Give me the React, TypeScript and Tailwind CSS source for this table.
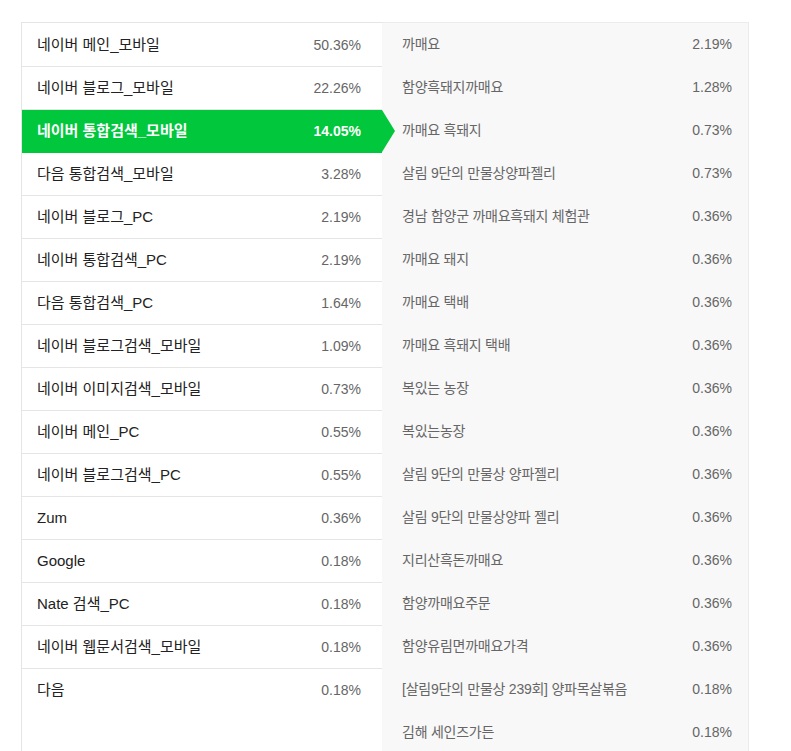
const sources = [
  { name: '네이버 메인_모바일', pct: '50.36%' },
  { name: '네이버 블로그_모바일', pct: '22.26%' },
  { name: '네이버 통합검색_모바일', pct: '14.05%', active: true },
  { name: '다음 통합검색_모바일', pct: '3.28%' },
  { name: '네이버 블로그_PC', pct: '2.19%' },
  { name: '네이버 통합검색_PC', pct: '2.19%' },
  { name: '다음 통합검색_PC', pct: '1.64%' },
  { name: '네이버 블로그검색_모바일', pct: '1.09%' },
  { name: '네이버 이미지검색_모바일', pct: '0.73%' },
  { name: '네이버 메인_PC', pct: '0.55%' },
  { name: '네이버 블로그검색_PC', pct: '0.55%' },
  { name: 'Zum', pct: '0.36%' },
  { name: 'Google', pct: '0.18%' },
  { name: 'Nate 검색_PC', pct: '0.18%' },
  { name: '네이버 웹문서검색_모바일', pct: '0.18%' },
  { name: '다음', pct: '0.18%' },
];

const keywords = [
  { word: '까매요', pct: '2.19%' },
  { word: '함양흑돼지까매요', pct: '1.28%' },
  { word: '까매요 흑돼지', pct: '0.73%' },
  { word: '살림 9단의 만물상양파젤리', pct: '0.73%' },
  { word: '경남 함양군 까매요흑돼지 체험관', pct: '0.36%' },
  { word: '까매요 돼지', pct: '0.36%' },
  { word: '까매요 택배', pct: '0.36%' },
  { word: '까매요 흑돼지 택배', pct: '0.36%' },
  { word: '복있는 농장', pct: '0.36%' },
  { word: '복있는농장', pct: '0.36%' },
  { word: '살림 9단의 만물상 양파젤리', pct: '0.36%' },
  { word: '살림 9단의 만물상양파 젤리', pct: '0.36%' },
  { word: '지리산흑돈까매요', pct: '0.36%' },
  { word: '함양까매요주문', pct: '0.36%' },
  { word: '함양유림면까매요가격', pct: '0.36%' },
  { word: '[살림9단의 만물상 239회] 양파목살볶음', pct: '0.18%' },
  { word: '김해 세인즈가든', pct: '0.18%' },
];

export default function App() {
  return (
    <div className="min-h-[751px] bg-white pt-[22px] pl-[21px] font-['Liberation_Sans','Noto_Sans_CJK_KR',sans-serif] text-[14px]">
      <div className="flex w-[728px]">
        {/* referrer list */}
        <div className="w-[361px] border-l border-t border-[#e5e5e5] bg-white pt-px">
          {sources.map((s, i) => (
            <div
              key={s.name}
              className={
                s.active
                  ? 'relative z-10 flex h-[43px] items-center justify-between bg-[#00c73c] pl-[15px] pr-[21px] font-bold text-white'
                  : i === sources.length - 1
                    ? 'flex h-[43px] items-center justify-between pl-[15px] pr-[21px]'
                    : 'flex h-[43px] items-center justify-between border-b border-[#e5e5e5] pl-[15px] pr-[21px]'
              }
            >
              <span className={s.active ? 'text-[15px] text-white' : 'text-[15px] text-[#222]'}>{s.name}</span>
              <span className={s.active ? 'text-white' : 'text-[#666]'}>{s.pct}</span>
              {s.active && (
                <span className="absolute top-0 right-[-13px] h-0 w-0 border-y-[21.5px] border-l-[13px] border-y-transparent border-l-[#00c73c]" />
              )}
            </div>
          ))}
        </div>

        {/* keyword list */}
        <div className="flex-1 border-t border-r border-[#ebebeb] bg-[#f8f8f8]">
          {keywords.map(k => (
            <div
              key={k.word}
              className="flex h-[43px] items-center justify-between pl-5 pr-4 text-[#666]"
            >
              <span className="tracking-[-0.25px]">{k.word}</span>
              <span>{k.pct}</span>
            </div>
          ))}
        </div>
      </div>
    </div>
  );
}
